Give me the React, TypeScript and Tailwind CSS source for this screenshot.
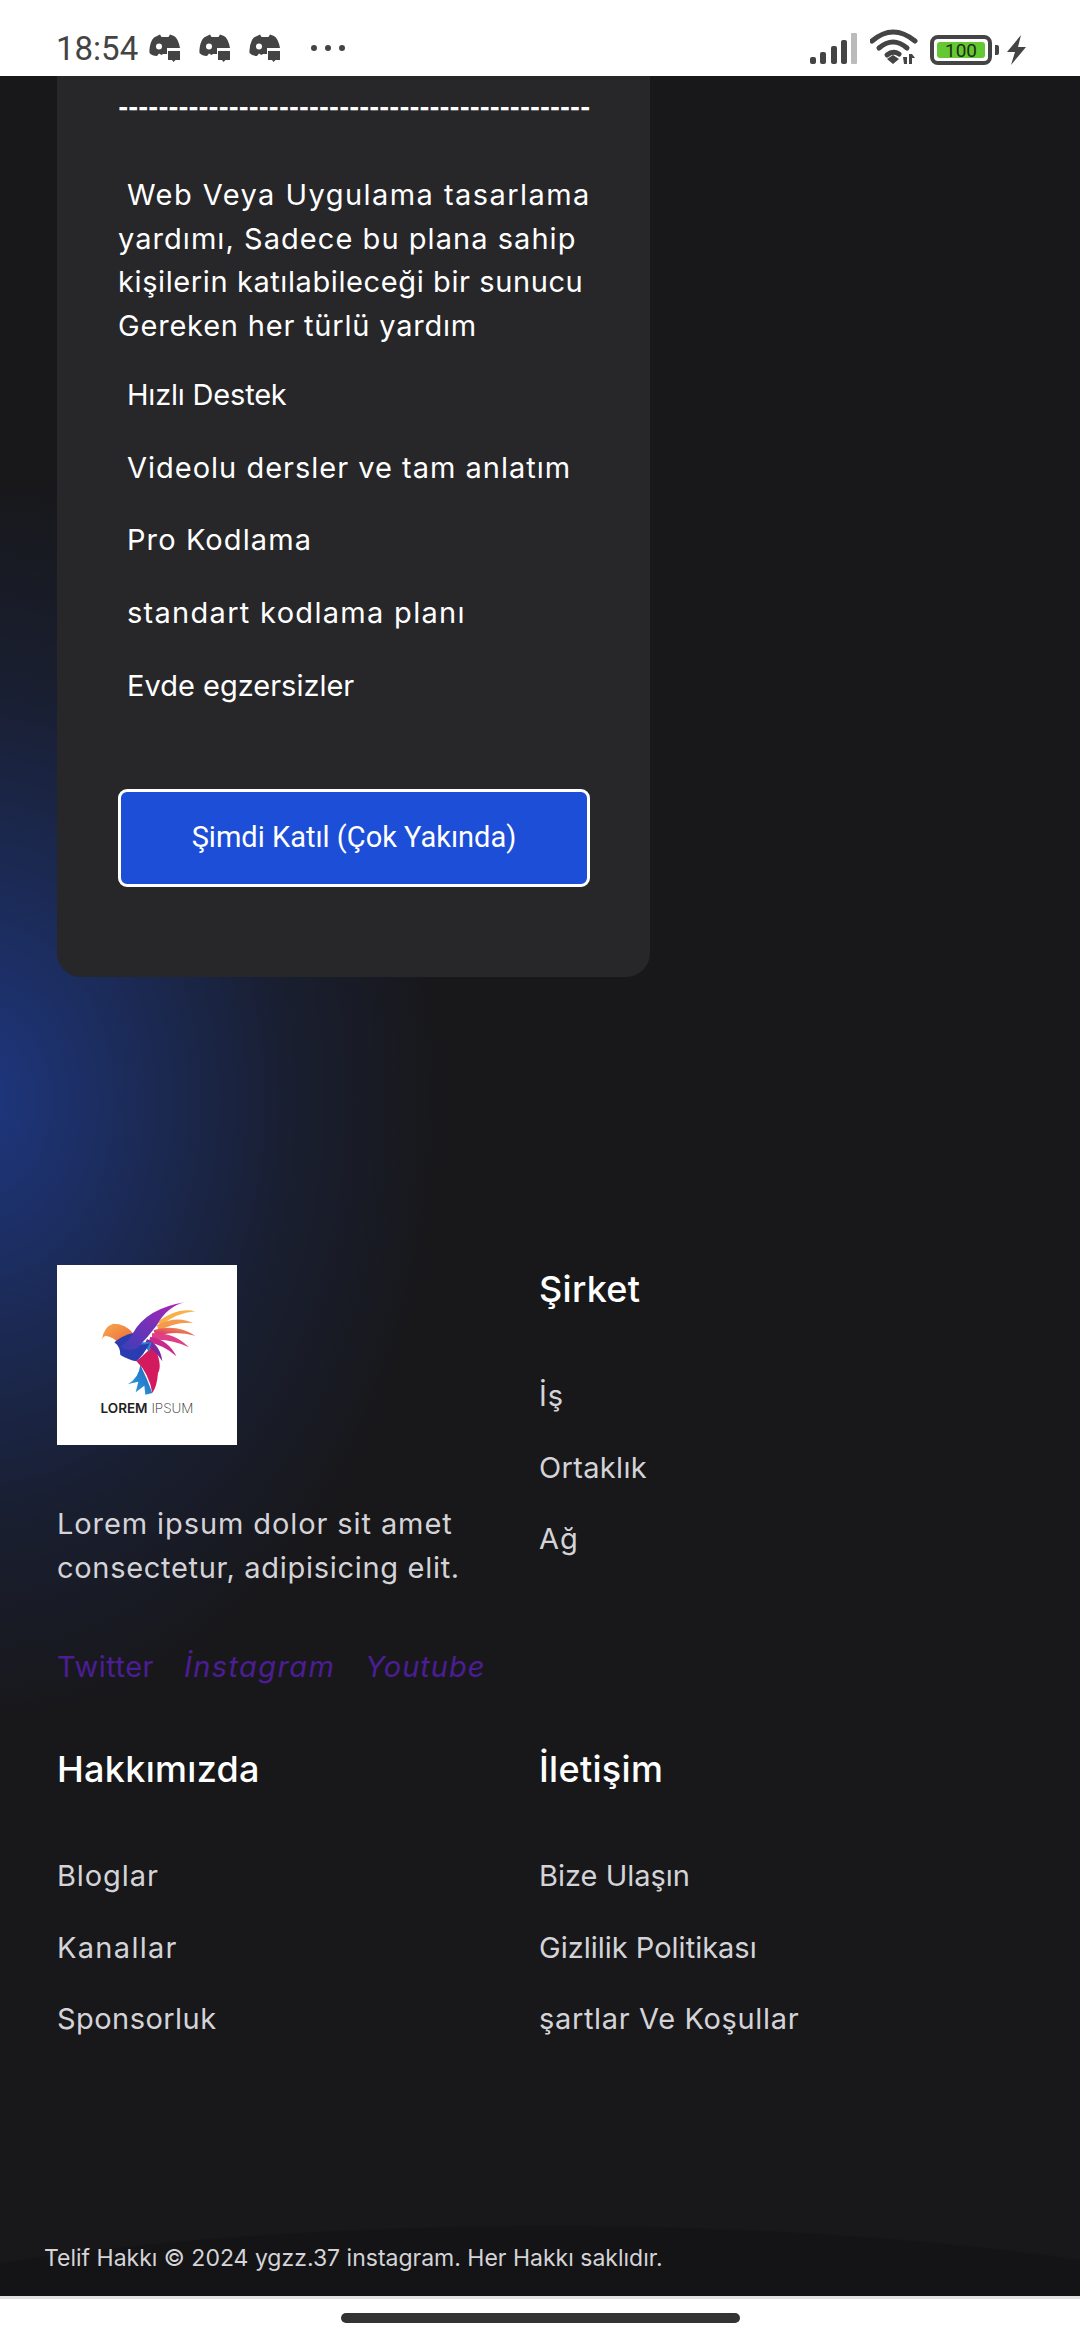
const font = "font-['Inter','Noto_Sans',sans-serif]";

function GameIcon() {
  return (
    <svg viewBox="0 0 32 28" className="w-[32px] h-[28px] text-[#444]" fill="currentColor">
      <path d="M8 2 L11 0.5 L12.5 3 H19.5 L21 0.5 L25 2 Q29 4 31 14 H18 V20 H14 L12.5 21 L10 19.5 L8 22 Q3 22 0.5 19 Q0 12 3 6 Q4.5 3 8 2 Z" />
      <circle cx="10" cy="12.5" r="3" fill="#fff" />
      <path d="M19 17 H31 V26 H26.5 L24.5 28 L23 26 H19 Z" />
    </svg>
  );
}

function StatusBar() {
  return (
    <div className="h-[76px] bg-white flex items-center justify-between pl-[56px] pr-[53px] pt-[20px] shrink-0">
      <div className="flex items-center">
        <span className="font-['Roboto',sans-serif] text-[#444] text-[33px] leading-none w-[93px]">18:54</span>
        <div className="flex gap-[18px]">
          <GameIcon />
          <GameIcon />
          <GameIcon />
        </div>
        <div className="flex gap-[8px] ml-[30px]">
          <span className="w-[6px] h-[6px] rounded-full bg-[#444]" />
          <span className="w-[6px] h-[6px] rounded-full bg-[#444]" />
          <span className="w-[6px] h-[6px] rounded-full bg-[#444]" />
        </div>
      </div>
      <div className="flex items-end gap-[12px] h-[34px]">
        <svg viewBox="0 0 48 32" className="w-[48px] h-[32px]">
          <rect x="0" y="24" width="6" height="7" rx="2" fill="#444" />
          <rect x="10" y="19" width="6" height="12" rx="2" fill="#444" />
          <rect x="21" y="13" width="6" height="18" rx="2" fill="#444" />
          <rect x="31" y="7" width="6" height="24" rx="2" fill="#444" />
          <rect x="41" y="0" width="6" height="31" rx="1" fill="#bbb" />
        </svg>
        <svg viewBox="0 0 48 36" className="w-[48px] h-[36px]">
          <path d="M2 12 Q23 -6 45 12" fill="none" stroke="#444" strokeWidth="5" strokeLinecap="round" />
          <path d="M9 19 Q23 7 37 19" fill="none" stroke="#444" strokeWidth="5" strokeLinecap="round" />
          <path d="M17 26 Q23 21 29 25" fill="none" stroke="#444" strokeWidth="5" strokeLinecap="round" />
          <path d="M17 30 L23 26 L29 30 L23 35 Z" fill="#444" />
          <path d="M33 28 L37 28 L37 35 L34 35 Z M39 25 L42 25 L45 29 L42 29 L42 35 L39 35 Z" fill="#444" />
        </svg>
        <div className="flex items-center gap-[3px]">
          <div className="w-[62px] h-[30px] border-[4px] border-[#444] rounded-[8px] p-[3px]">
            <div className="w-full h-full bg-[#64c832] rounded-[3px] flex items-center justify-center font-['Roboto',sans-serif] text-[#1e2e14] text-[19px] leading-none">100</div>
          </div>
          <div className="w-[4px] h-[10px] bg-[#444] rounded-r-[2px]" />
        </div>
        <svg viewBox="0 0 20 30" className="w-[20px] h-[30px] ml-[-4px]">
          <path d="M14 0 L0 17 H8 L4 30 L19 12 H11 Z" fill="#444" />
        </svg>
      </div>
    </div>
  );
}

function BirdLogo() {
  return (
    <div className="w-[180px] h-[180px] bg-white flex flex-col items-center">
      <svg viewBox="0 0 540 411" className="w-[180px] h-[137px] shrink-0">
        <defs>
          <linearGradient id="head" x1="0" y1="0" x2="1" y2="1">
            <stop offset="0" stopColor="#f9ab4c" />
            <stop offset="1" stopColor="#e8653c" />
          </linearGradient>
          <linearGradient id="wing" x1="0" y1="1" x2="1" y2="0">
            <stop offset="0" stopColor="#3a3fb8" />
            <stop offset="1" stopColor="#b522b8" />
          </linearGradient>
          <linearGradient id="feather" x1="0" y1="1" x2="1" y2="0">
            <stop offset="0" stopColor="#d81b6e" />
            <stop offset="1" stopColor="#f6a24a" />
          </linearGradient>
          <linearGradient id="tail" x1="1" y1="0" x2="0" y2="1">
            <stop offset="0" stopColor="#2a5fc0" />
            <stop offset="1" stopColor="#25a6dc" />
          </linearGradient>
        </defs>
        <path d="M250 300 Q270 340 286 384 L265 389 L262 362 L236 382 L244 350 L213 357 Q245 340 250 300 Z" fill="url(#tail)" />
        <path d="M238 288 Q262 270 290 240 Q318 300 303 324 Q300 365 286 384 Q276 325 238 288 Z" fill="#d41a5e" />
        <path d="M300 172 Q360 125 415 139 Q355 145 315 180 Z" fill="#f7b04a" />
        <path d="M300 180 Q360 150 408 174 Q350 170 305 200 Z" fill="#f49a4e" />
        <path d="M290 195 Q360 175 415 212 Q350 195 295 215 Z" fill="url(#feather)" />
        <path d="M285 205 Q350 200 396 247 Q340 220 285 225 Z" fill="#de3f86" />
        <path d="M280 215 Q335 225 358 274 Q320 240 275 232 Z" fill="#c72a8a" />
        <path d="M270 222 Q310 240 316 289 Q295 255 262 240 Z" fill="#7a2a9e" />
        <path d="M240 245 L258 270 L262 240 L276 262 L284 232 L250 232 Z" fill="#2f7fd0" />
        <path d="M135 224 Q140 185 168 176 Q205 176 228 204 Q205 215 190 240 Q170 215 145 212 Q138 215 135 224 Z" fill="url(#head)" />
        <path d="M172 232 Q190 245 190 270 Q215 285 238 289 Q260 270 278 235 Q225 250 228 204 Q195 212 172 232 Z" fill="#2a3cb0" />
        <path d="M190 245 Q215 230 228 204 Q270 130 383 112 Q330 125 300 180 Q270 220 240 250 Q215 262 190 245 Z" fill="url(#wing)" />
      </svg>
      <div className="font-['Inter',sans-serif] text-[13.5px] leading-none text-[#222] whitespace-nowrap">
        <span className="font-semibold">LOREM</span> <span className="font-extralight">IPSUM</span>
      </div>
    </div>
  );
}

// Spacing is set line by line: the installed font's letter widths differ from the picture's.
const planItems = [
  { text: "Hızlı Destek", track: "tracking-[-0.2px]" },
  { text: "Videolu dersler ve tam anlatım", track: "tracking-[1px]" },
  { text: "Pro Kodlama", track: "tracking-[1.1px]" },
  { text: "standart kodlama planı", track: "tracking-[1.3px]" },
  { text: "Evde egzersizler", track: "tracking-[0px]" },
];

function PlanCard() {
  return (
    <div className="ml-[57px] w-[593px] h-[901px] bg-[#27272a] rounded-b-[24px] px-[61px]">
      <div className="mt-[19px] h-[24px] text-white text-[22px] leading-[24px] font-black whitespace-nowrap tracking-[-0.4px]">
        {"-".repeat(47)}
      </div>
      <p className="mt-[54px] text-white text-[29px] leading-[43.7px] whitespace-nowrap">
        <span className="pl-[9px] tracking-[1.45px]">Web Veya Uygulama tasarlama</span>
        <br />
        <span className="tracking-[1.05px]">yardımı, Sadece bu plana sahip</span>
        <br />
        <span className="tracking-[0.6px]">kişilerin katılabileceği bir sunucu</span>
        <br />
        <span className="tracking-[0.8px]">Gereken her türlü yardım</span>
      </p>
      <ul className="mt-[25px] flex flex-col gap-[28.8px]">
        {planItems.map((item) => (
          <li key={item.text} className={`text-white text-[29px] leading-[44px] pl-[9px] ${item.track}`}>
            {item.text}
          </li>
        ))}
      </ul>
      <button className="mt-[81px] w-[472px] h-[98px] rounded-[9px] border-[3px] border-white bg-[#1d4ed8] text-white font-['Roboto',sans-serif] text-[29px]">
        Şimdi Katıl (Çok Yakında)
      </button>
    </div>
  );
}

type FooterLink = { label: string; track: string };

function LinkColumn({ title, links }: { title: string; links: FooterLink[] }) {
  return (
    <div>
      <h3 className="text-white text-[36px] leading-[48px] font-medium tracking-[0.3px]">{title}</h3>
      <ul className="mt-[61px] flex flex-col gap-[27.6px]">
        {links.map((l) => (
          <li key={l.label} className={`text-[#d4d4d8] text-[29px] leading-[44px] ${l.track}`}>{l.label}</li>
        ))}
      </ul>
    </div>
  );
}

function Footer() {
  return (
    <div className="mt-[288px] px-[57px] grid grid-cols-[482px_1fr]">
      <div>
        <BirdLogo />
        <p className="mt-[57px] text-[#d4d4d8] text-[29px] leading-[43.5px] whitespace-nowrap">
          <span className="tracking-[0.9px]">Lorem ipsum dolor sit amet</span>
          <br />
          <span className="tracking-[0.7px]">consectetur, adipisicing elit.</span>
        </p>
        <div className="mt-[56px] flex gap-[30px] text-[#4c1d95] text-[29px] leading-[44px]">
          <span className="tracking-[0.5px]">Twitter</span>
          <span className="italic tracking-[1.4px]">İnstagram</span>
          <span className="italic tracking-[1px]">Youtube</span>
        </div>
      </div>
      <LinkColumn
        title="Şirket"
        links={[
          { label: "İş", track: "tracking-[0.9px]" },
          { label: "Ortaklık", track: "tracking-[0.35px]" },
          { label: "Ağ", track: "tracking-[0.9px]" },
        ]}
      />
      <div className="mt-[56px]">
        <LinkColumn
          title="Hakkımızda"
          links={[
            { label: "Bloglar", track: "tracking-[0.9px]" },
            { label: "Kanallar", track: "tracking-[1.3px]" },
            { label: "Sponsorluk", track: "tracking-[0.45px]" },
          ]}
        />
      </div>
      <div className="mt-[56px]">
        <LinkColumn
          title="İletişim"
          links={[
            { label: "Bize Ulaşın", track: "tracking-[0px]" },
            { label: "Gizlilik Politikası", track: "tracking-[0px]" },
            { label: "şartlar Ve Koşullar", track: "tracking-[0.65px]" },
          ]}
        />
      </div>
    </div>
  );
}

export default function App() {
  return (
    <div className={`${font} w-[1080px] h-[2340px] flex flex-col overflow-hidden bg-white`}>
      <StatusBar />
      <main className="h-[2220px] shrink-0 flex flex-col bg-[#18181b] bg-[radial-gradient(ellipse_900px_175px_at_550px_2324px,#141416_99%,transparent_100%),radial-gradient(ellipse_460px_620px_at_-20px_1024px,#1e3a8ae6_0%,#1e3a8a80_38%,#1e3a8a30_68%,transparent_100%)] bg-no-repeat">
        <PlanCard />
        <Footer />
        <p className="mt-auto mb-[21px] ml-[44px] text-[#d4d4d8] text-[23px] leading-[34px]">
          Telif Hakkı © 2024 ygzz.37 instagram. Her Hakkı saklıdır.
        </p>
      </main>
      <div className="flex-1 bg-white border-t-[3px] border-[#e0e0e0] flex justify-center pt-[14px]">
        <div className="w-[399px] h-[10px] rounded-full bg-[#333]" />
      </div>
    </div>
  );
}
